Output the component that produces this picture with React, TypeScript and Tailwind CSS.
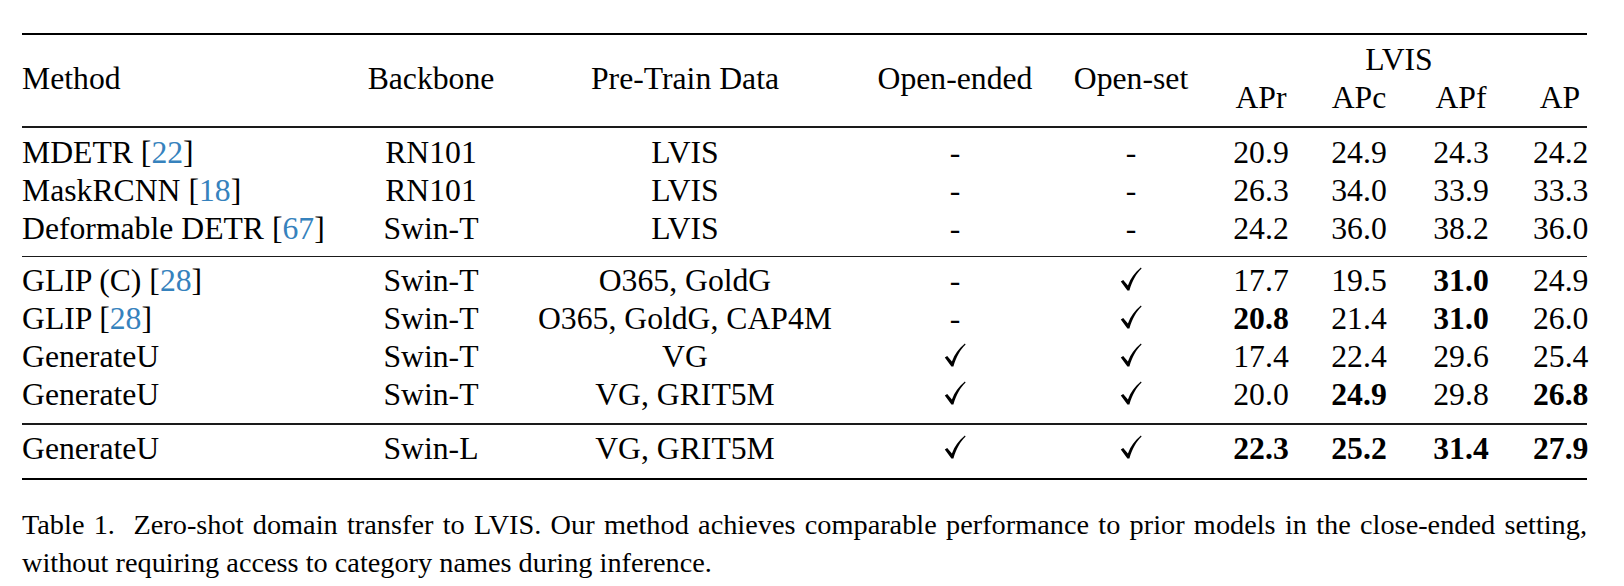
import React from "react";

type Cell = { v: string; b?: boolean };

const cols =
  "grid grid-cols-[311px_196px_312px_228px_124px_136px_60px_144px_54px] w-[1565px]";

function Cite({ n }: { n: string }) {
  return (
    <>
      [<span className="text-[#3682bd]">{n}</span>]
    </>
  );
}

function Check() {
  return (
    <svg
      viewBox="0 0 22 24"
      className="inline-block align-baseline w-[22px] h-[24px]"
      aria-label="check"
    >
      <path
        d="M0.8 14.6 L3.2 12.9 L7.9 18.4 C10.6 11.6 14.6 5.6 20.9 0.6 L21.6 1.5 C16.2 6.8 12.4 13.4 9.4 23.4 L7.4 23.6 Z"
        fill="black"
      />
    </svg>
  );
}

type Row = {
  method: React.ReactNode;
  backbone: string;
  data: string;
  oe: boolean;
  os: boolean;
  nums: Cell[];
};

const g1: Row[] = [
  {
    method: (
      <>
        MDETR <Cite n="22" />
      </>
    ),
    backbone: "RN101",
    data: "LVIS",
    oe: false,
    os: false,
    nums: [{ v: "20.9" }, { v: "24.9" }, { v: "24.3" }, { v: "24.2" }],
  },
  {
    method: (
      <>
        MaskRCNN <Cite n="18" />
      </>
    ),
    backbone: "RN101",
    data: "LVIS",
    oe: false,
    os: false,
    nums: [{ v: "26.3" }, { v: "34.0" }, { v: "33.9" }, { v: "33.3" }],
  },
  {
    method: (
      <>
        Deformable DETR <Cite n="67" />
      </>
    ),
    backbone: "Swin-T",
    data: "LVIS",
    oe: false,
    os: false,
    nums: [{ v: "24.2" }, { v: "36.0" }, { v: "38.2" }, { v: "36.0" }],
  },
];

const g2: Row[] = [
  {
    method: (
      <>
        GLIP (C) <Cite n="28" />
      </>
    ),
    backbone: "Swin-T",
    data: "O365, GoldG",
    oe: false,
    os: true,
    nums: [{ v: "17.7" }, { v: "19.5" }, { v: "31.0", b: true }, { v: "24.9" }],
  },
  {
    method: (
      <>
        GLIP <Cite n="28" />
      </>
    ),
    backbone: "Swin-T",
    data: "O365, GoldG, CAP4M",
    oe: false,
    os: true,
    nums: [{ v: "20.8", b: true }, { v: "21.4" }, { v: "31.0", b: true }, { v: "26.0" }],
  },
  {
    method: "GenerateU",
    backbone: "Swin-T",
    data: "VG",
    oe: true,
    os: true,
    nums: [{ v: "17.4" }, { v: "22.4" }, { v: "29.6" }, { v: "25.4" }],
  },
  {
    method: "GenerateU",
    backbone: "Swin-T",
    data: "VG, GRIT5M",
    oe: true,
    os: true,
    nums: [{ v: "20.0" }, { v: "24.9", b: true }, { v: "29.8" }, { v: "26.8", b: true }],
  },
];

const g3: Row[] = [
  {
    method: "GenerateU",
    backbone: "Swin-L",
    data: "VG, GRIT5M",
    oe: true,
    os: true,
    nums: [
      { v: "22.3", b: true },
      { v: "25.2", b: true },
      { v: "31.4", b: true },
      { v: "27.9", b: true },
    ],
  },
];

function TableRow({ r }: { r: Row }) {
  return (
    <div className={`${cols} h-[38px] leading-[38px]`}>
      <div className="text-left whitespace-nowrap">{r.method}</div>
      <div className="text-center">{r.backbone}</div>
      <div className="text-center whitespace-nowrap">{r.data}</div>
      <div className="text-center">{r.oe ? <Check /> : "-"}</div>
      <div className="text-center">{r.os ? <Check /> : "-"}</div>
      {r.nums.map((n, i) => (
        <div key={i} className={n.b ? "text-center font-bold" : "text-center"}>
          {n.v}
        </div>
      ))}
    </div>
  );
}

function Group({ rows, pt, pb }: { rows: Row[]; pt: string; pb: string }) {
  return (
    <div className={`${pt} ${pb}`}>
      {rows.map((r, i) => (
        <TableRow key={i} r={r} />
      ))}
    </div>
  );
}

export default function App() {
  return (
    <div className="w-full min-h-[586px] bg-white text-black [font-family:'Liberation_Serif',serif] pl-[22px] pt-[33px]">
      <div className="w-[1565px] text-[31.7px]">
        <div className="h-[2px] bg-black" />
        <div className={`${cols} grid-rows-[38px_38px] pt-[6px] pb-[9px] leading-[38px]`}>
          <div className="row-span-2 self-center text-left">Method</div>
          <div className="row-span-2 self-center text-center">Backbone</div>
          <div className="row-span-2 self-center text-center">Pre-Train Data</div>
          <div className="row-span-2 self-center text-center">Open-ended</div>
          <div className="row-span-2 self-center text-center">Open-set</div>
          <div className="col-span-4 text-center pl-[18px]">LVIS</div>
          <div className="text-center">APr</div>
          <div className="text-center">APc</div>
          <div className="text-center">APf</div>
          <div className="text-center">AP</div>
        </div>
        <div className="h-[1.5px] bg-[#1a1a1a]" />
        <Group rows={g1} pt="pt-[6px]" pb="pb-[8px]" />
        <div className="h-[1.5px] bg-[#1a1a1a]" />
        <Group rows={g2} pt="pt-[5px]" pb="pb-[9px]" />
        <div className="h-[1.5px] bg-[#1a1a1a]" />
        <Group rows={g3} pt="pt-[5px]" pb="pb-[10px]" />
        <div className="h-[2px] bg-black" />
      </div>
      <div className="w-[1565px] mt-[26px] text-[28.3px] leading-[38px]">
        <div className="text-justify [text-align-last:justify] whitespace-nowrap">
          Table 1.&nbsp; Zero-shot domain transfer to LVIS. Our method achieves comparable performance
          to prior models in the close-ended setting,
        </div>
        <div className="text-left">without requiring access to category names during inference.</div>
      </div>
    </div>
  );
}
